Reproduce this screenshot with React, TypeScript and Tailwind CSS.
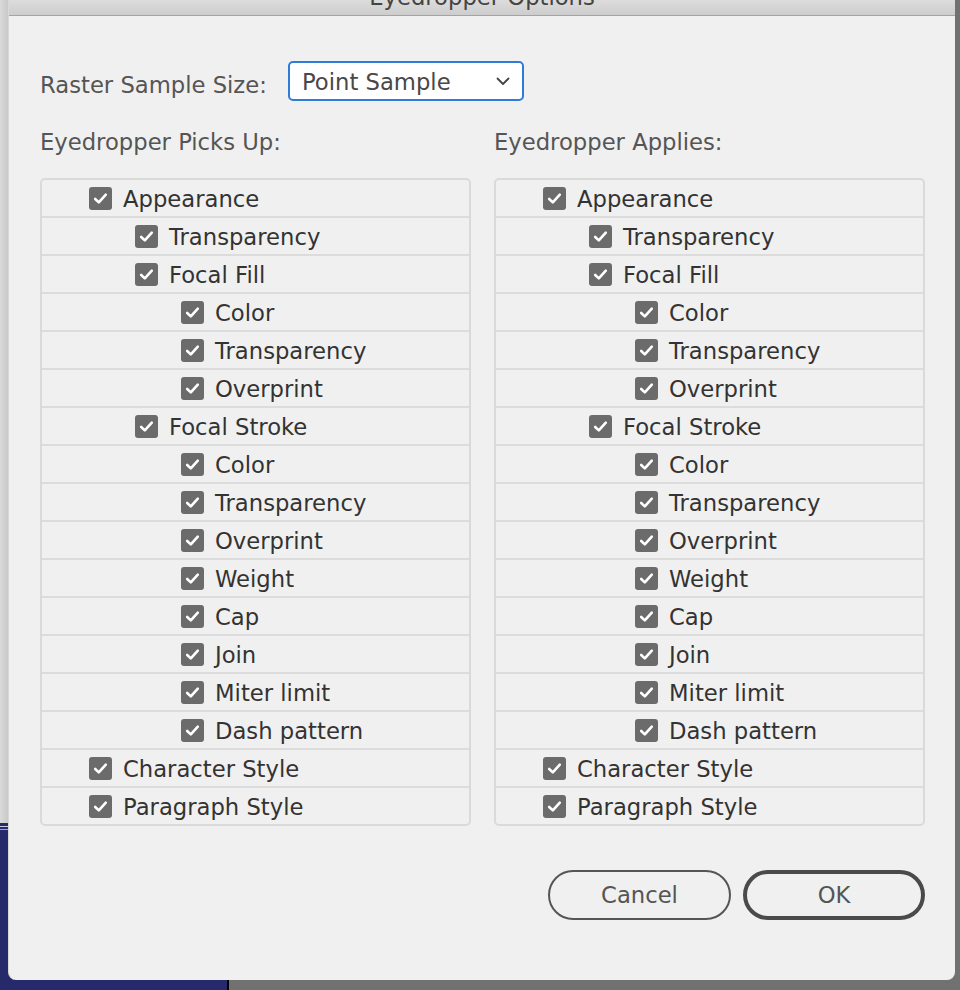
import React from 'react';

type Item = { label: string; level: 0 | 1 | 2 };

const items: Item[] = [
    { label: 'Appearance', level: 0 },
    { label: 'Transparency', level: 1 },
    { label: 'Focal Fill', level: 1 },
    { label: 'Color', level: 2 },
    { label: 'Transparency', level: 2 },
    { label: 'Overprint', level: 2 },
    { label: 'Focal Stroke', level: 1 },
    { label: 'Color', level: 2 },
    { label: 'Transparency', level: 2 },
    { label: 'Overprint', level: 2 },
    { label: 'Weight', level: 2 },
    { label: 'Cap', level: 2 },
    { label: 'Join', level: 2 },
    { label: 'Miter limit', level: 2 },
    { label: 'Dash pattern', level: 2 },
    { label: 'Character Style', level: 0 },
    { label: 'Paragraph Style', level: 0 },
];

const indent = ['pl-[47px]', 'pl-[93px]', 'pl-[139px]'];

export default function App() {
    return (
        <div className="relative w-[960px] h-[990px] overflow-hidden bg-[#717171] font-['DejaVu_Sans',sans-serif]">
            {/* Desktop behind the dialog */}
            <div className="absolute left-0 top-0 w-[8px] h-[823px] bg-gradient-to-r from-[#dadada] to-[#c9c9c9]" />
            <div className="absolute left-0 top-[823px] w-[227px] h-[167px] bg-[#262a6b]">
                <div className="mt-[3px] w-[8px] h-[1px] bg-[#c8cbe6]" />
                <div className="mt-[2px] w-[8px] h-[1px] bg-[#9fa3d0]" />
            </div>
            <div className="absolute left-[227px] top-[823px] w-[2px] h-[167px] bg-black" />

            {/* Dialog window */}
            <div className="absolute left-[8px] top-0 w-[947px] h-[980px] bg-[#f0f0f0] rounded-b-[8px] border-l border-[#d8d8d8] flex flex-col">
                <div className="h-[16px] shrink-0 overflow-hidden bg-gradient-to-b from-[#dcdcdc] to-[#cdcdcd] border-b border-[#a4a4a4] text-center">
                    <div className="mt-[-14px] text-[22.7px] leading-[22px] text-[#444]">Eyedropper Options</div>
                </div>

                <div className="flex flex-col pl-[31px] pr-[30px]">
                    {/* Raster sample size */}
                    <div className="mt-[45px] flex items-center">
                        <div className="w-[248px] pt-[8px] text-[22.7px] leading-[26px] text-[#555]">Raster Sample Size:</div>
                        <div className="w-[236px] h-[40px] bg-white border-2 border-[#2f7bd8] rounded-[5px] flex items-center justify-between pl-[12px] pr-[12px]">
                            <span className="pt-[2px] text-[22.7px] leading-[26px] text-[#484848]">Point Sample</span>
                            <svg width="14" height="9" viewBox="0 0 14 9" fill="none">
                                <path d="M1.5 1.5 L7 7 L12.5 1.5" stroke="#444" strokeWidth="1.8" strokeLinecap="round" strokeLinejoin="round" />
                            </svg>
                        </div>
                    </div>

                    {/* Two lists */}
                    <div className="mt-[27px] flex gap-[23px]">
                        <CheckColumn title="Eyedropper Picks Up:" />
                        <CheckColumn title="Eyedropper Applies:" />
                    </div>

                    {/* Buttons */}
                    <div className="mt-[44px] flex justify-end gap-[12px]">
                        <button className="w-[183px] h-[50px] rounded-full border-2 border-[#555] text-[22.7px] text-[#555] flex items-center justify-center">
                            Cancel
                        </button>
                        <button className="w-[182px] h-[50px] rounded-full border-[4px] border-[#4a4a4a] text-[22.7px] text-[#555] flex items-center justify-center">
                            OK
                        </button>
                    </div>
                </div>
            </div>
        </div>
    );
}

function CheckColumn({ title }: { title: string }) {
    return (
        <div className="flex-1 flex flex-col">
            <div className="pt-[1px] text-[22.7px] leading-[26px] text-[#555]">{title}</div>
            <div className="mt-[23px] border-2 border-[#dadada] rounded-[5px] flex flex-col">
                {items.map((item, i) => (
                    <div
                        key={i}
                        className={`flex items-center gap-[11px] ${indent[item.level]} ${i === 0 ? 'h-[36px]' : 'h-[38px] border-t-2 border-[#dcdcdc]'}`}
                    >
                        <CheckBox />
                        <span className="pt-[2px] text-[22.7px] leading-[26px] text-[#333]">{item.label}</span>
                    </div>
                ))}
            </div>
        </div>
    );
}

function CheckBox() {
    return (
        <div className="w-[23px] h-[23px] rounded-[3px] bg-[#6b6b6b] flex items-center justify-center shrink-0">
            <svg width="15" height="13" viewBox="0 0 15 13" fill="none">
                <path d="M2.2 7 L5.8 10.4 L12.8 2.6" stroke="white" strokeWidth="2.6" strokeLinecap="round" strokeLinejoin="round" />
            </svg>
        </div>
    );
}
